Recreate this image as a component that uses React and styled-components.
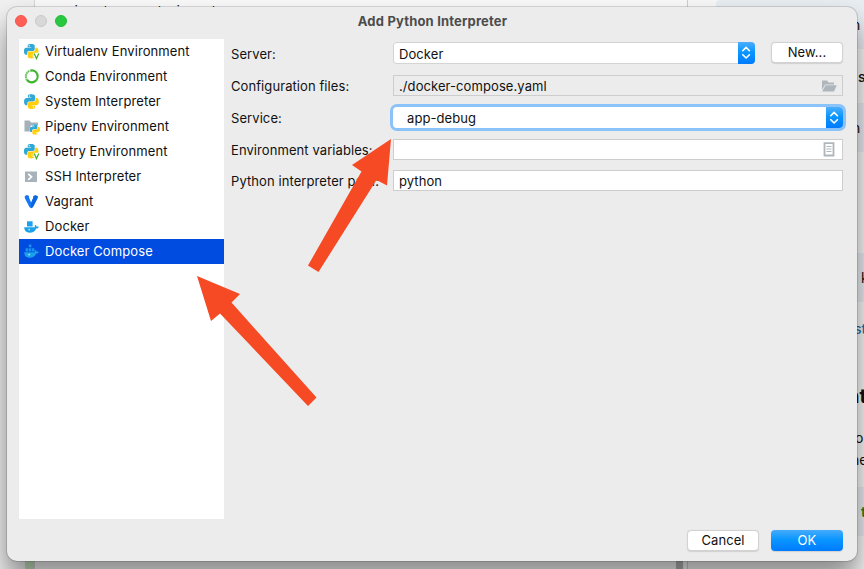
import React from "react";
import styled, { createGlobalStyle } from "styled-components";

const Global = createGlobalStyle`
  * { box-sizing: border-box; }
  body { margin: 0; overflow: hidden; font-family: Inter, sans-serif; font-size: 13px; color: #111; }
`;

const Desktop = styled.div`
  position: relative;
  display: flex;
  width: 864px;
  height: 569px;
  overflow: hidden;
  background: #f7f7f7;
`;
const Gutter = styled.div`
  flex: none;
  display: flex;
  flex-direction: column;
  justify-content: flex-end;
  align-items: flex-end;
  width: 35px;
  border-right: 1px solid #d5d5d5;
  background: #f0f0f0;
`;
const ChangeMark = styled.div`
  width: 9px;
  height: 60px;
  background: #c5e0bd;
`;
const Editor = styled.div`
  flex: none;
  display: flex;
  flex-direction: column;
  justify-content: space-between;
  align-items: flex-start;
  width: 653px;
  padding-left: 38px;
  border-right: 1px solid #cfcfcf;
  background: #f9f9f9;
`;
const CodeLine = styled.div`
  height: 14px;
  line-height: 21px;
  font-family: "Liberation Mono", monospace;
  font-size: 10px;
  font-weight: 700;
  white-space: pre;
`;
const ScrollThumb = styled.div`
  align-self: flex-end;
  width: 7px;
  height: 40px;
  margin-right: 4px;
  background: #b4b4b4;
`;
const Docs = styled.div`
  flex: none;
  width: 176px;
  padding-left: 28px;
`;
const DocLine = styled.div`
  display: flex;
  align-items: center;
  height: ${(p) => p.$h}px;
  padding-left: ${(p) => p.$x || 0}px;
  background: ${(p) => (p.$code ? "#e8edf1" : "transparent")};
  border-radius: ${(p) => (p.$code ? "4px 0 0 4px" : 0)};
  color: ${(p) => p.$color || "#111"};
  font-size: ${(p) => p.$size || 14}px;
  font-weight: ${(p) => p.$weight || 400};
  white-space: pre;
`;

const Dialog = styled.section`
  position: absolute;
  inset: 7px 7px 8px 7px;
  display: flex;
  flex-direction: column;
  border-radius: 10px;
  background: #ececec;
  box-shadow: 0 0 0 1px rgba(0, 0, 0, 0.13), 0 20px 30px rgba(0, 0, 0, 0.36), 0 12px 20px rgba(0, 0, 0, 0.12);
`;
const TitleBar = styled.header`
  display: grid;
  grid-template-columns: 60px 1fr 67px;
  align-items: center;
  height: 32px;
  padding: 0 0 4px 8px;
`;
const Lights = styled.div`
  display: flex;
  gap: 8px;
`;
const Light = styled.span`
  width: 12px;
  height: 12px;
  border-radius: 50%;
  background: ${(p) => p.$fill};
  border: 1px solid ${(p) => p.$edge};
`;
const Title = styled.h1`
  margin: 0;
  text-align: center;
  font-size: 13px;
  line-height: 16px;
  font-weight: 700;
  letter-spacing: 0.18px;
  color: #4c4c4c;
`;
const Content = styled.div`
  display: flex;
  gap: 7px;
  padding: 0 14px 0 12px;
`;
const KindList = styled.ul`
  width: 205px;
  height: 480px;
  margin: 0;
  padding: 0;
  list-style: none;
  background: #fff;
`;
const KindItem = styled.li`
  display: flex;
  align-items: center;
  gap: 5px;
  height: 25px;
  padding-left: 5px;
  background: ${(p) => (p.$selected ? "#004be0" : "transparent")};
  color: ${(p) => (p.$selected ? "#fff" : "#111")};
  letter-spacing: 0.1px;
  svg { width: 16px; height: 16px; flex: none; }
`;
const KindName = styled.span`
  padding-bottom: 1px;
`;
const Form = styled.div`
  display: grid;
  grid-template-columns: 162px 450px;
  grid-template-rows: 22px 22px 22px 22px 22px;
  row-gap: 10px;
  align-content: start;
  padding-top: 3px;
  letter-spacing: 0.08px;
`;
const Label = styled.label`
  line-height: ${(p) => (p.$last ? 22 : 24)}px;
  height: 22px;
  white-space: nowrap;
`;
const Pair = styled.div`
  display: flex;
  justify-content: space-between;
`;
const Combo = styled.div`
  display: flex;
  justify-content: space-between;
  width: ${(p) => p.$w}px;
  height: ${(p) => (p.$focus ? 21 : 22)}px;
  margin-top: ${(p) => (p.$focus ? 1 : 0)}px;
  padding-left: ${(p) => (p.$focus ? 14 : 6)}px;
  line-height: ${(p) => (p.$focus ? 22 : 24)}px;
  border-radius: 4px;
  background: #fff;
  box-shadow: ${(p) => (p.$focus ? "0 0 0 3px #8ac2fa" : "inset 0 0 0 1px #d4d4d4")};
`;
const Stepper = styled.span`
  display: flex;
  align-items: center;
  justify-content: center;
  width: 17px;
  border-radius: 0 4px 4px 0;
  background: linear-gradient(#4caefc, #0a96ff 45%, #007bff);
`;
const Field = styled.div`
  display: flex;
  align-items: center;
  justify-content: space-between;
  height: 21px;
  margin-top: ${(p) => (p.$last ? 0 : 1)}px;
  padding: 0 ${(p) => p.$end || 5}px 0 5px;
  border: 1px solid #cdcdcd;
  background: ${(p) => (p.$disabled ? "#ececec" : "#fff")};
`;
const Button = styled.button`
  width: 72px;
  height: 21px;
  padding: 0;
  border: ${(p) => (p.$primary ? "0" : "1px solid #d2d2d2")};
  border-radius: 4px;
  font: inherit;
  line-height: ${(p) => (p.$primary ? 21 : 19)}px;
  letter-spacing: 0.08px;
  color: ${(p) => (p.$primary ? "#fff" : "#111")};
  background: ${(p) => (p.$primary ? "linear-gradient(#46acfc, #0a96ff 45%, #007bff)" : "#fff")};
  box-shadow: 0 0.5px 1px rgba(0, 0, 0, 0.12);
`;
const Footer = styled.footer`
  display: flex;
  justify-content: flex-end;
  gap: 12px;
  padding: 11px 14px 0 0;
`;
const Arrows = styled.svg`
  position: absolute;
  inset: 0;
  pointer-events: none;
`;

const SNAKE =
  "M14.25.18l.9.2.73.26.59.3.45.32.34.34.25.34.16.33.1.3.04.26.02.2-.01.13V8.5l-.05.63-.13.55-.21.46-.26.38-.3.31-.33.25-.35.19-.35.14-.33.1-.3.07-.26.04-.21.02H8.77l-.69.05-.59.14-.5.22-.41.27-.33.32-.27.35-.2.36-.15.37-.1.35-.07.32-.04.27-.02.21v3.06H3.17l-.21-.03-.28-.07-.32-.12-.35-.18-.36-.26-.36-.36-.35-.46-.32-.59-.28-.73-.21-.88-.14-1.05-.05-1.23.06-1.22.16-1.04.24-.87.32-.71.36-.57.4-.44.42-.33.42-.24.4-.16.36-.1.32-.05.24-.01h.16l.06.01h8.16v-.83H6.18l-.01-2.75-.02-.37.05-.34.11-.31.17-.28.25-.26.31-.23.38-.2.44-.18.51-.15.58-.12.64-.1.71-.06.77-.04.84-.02 1.27.05zm-6.3 1.98l-.23.33-.08.41.08.41.23.34.33.22.41.09.41-.09.33-.22.23-.34.08-.41-.08-.41-.23-.33-.33-.22-.41-.09-.41.09z";

const Snakes = ({ transform }) => (
  <g transform={transform}>
    <path d={SNAKE} fill="#2fa8d5" />
    <path d={SNAKE} fill="#ffcf0f" transform="rotate(180 12 12)" />
  </g>
);
const PythonIcon = () => (
  <svg viewBox="0 0 16 16"><Snakes transform="translate(.1 .3) scale(.61)" /></svg>
);
const VenvIcon = () => (
  <svg viewBox="0 0 16 16">
    <Snakes transform="translate(0 0) scale(.6)" />
    <path d="M9.3 8.8H16V16H10.5z" fill="#fff" />
    <path d="M10.2 9.6l2.3 5 2.3-5" fill="none" stroke="#4db32e" strokeWidth="1.3" />
  </svg>
);
const CondaIcon = () => (
  <svg viewBox="0 0 16 16" fill="none" stroke="#3fb42d">
    <path d="M6.6 1.6a5.9 5.9 0 1 1-3.5 9.4" strokeWidth="2.2" />
    <path d="M3.1 11A5.9 5.9 0 0 1 6.6 1.6" strokeWidth="2.1" strokeDasharray="1.7 .5" opacity=".75" />
  </svg>
);
const PipenvIcon = () => (
  <svg viewBox="0 0 16 16">
    <path d="M.5 1.500h5l1.600 2H14v9H.5z" fill="#a5b0b8" />
    <circle cx="10.800" cy="10.600" r="5.300" fill="#fff" />
    <Snakes transform="translate(5.700 5.300) scale(.43)" />
  </svg>
);
const SshIcon = () => (
  <svg viewBox="0 0 16 16">
    <path d="M1 2.500h12v10.500h-12z" fill="#a7b2ba" />
    <path d="M4.200 4.800l3.300 3-3.300 3" fill="none" stroke="#fff" strokeWidth="1.700" />
  </svg>
);
const VagrantIcon = () => (
  <svg viewBox="0 0 16 16">
    <path d="M.8 1.900l2.200-.9 2 .9v1.500l2.200 5.400 2.200-5.400V1.900l2-.9 2.200.9v2L9 12.900l-1.800 1.400-1.800-1.400L.8 3.900z" fill="#1477f5" />
    <path d="M9.400 3.400V1.900h4.200v2L9 12.900l-1.800 1.400V8.800z" fill="#0b64e0" />
  </svg>
);
const Hull = () => (
  <>
    <path d="M.2 8.300h10.800c-.4-.9-.4-1.700 0-2.500.9.400 1.400 1.100 1.600 1.700.7-.1 1.500 0 2.200.4-.4 1.100-1.400 1.500-2.600 1.500-1.200 3-3.300 4.300-6.500 4.300-3.600 0-5.500-1.800-5.500-5.400z" fill="#1ba1e8" />
    <circle cx="5.200" cy="10.600" r=".9" fill="#bfe4fa" />
  </>
);
const DockerIcon = () => (
  <svg viewBox="0 0 16 16"><path d="M3 2.300h5.600v5.200H3z" fill="#1ba1f0" /><Hull /></svg>
);
const ComposeIcon = () => (
  <svg viewBox="0 0 16 16">
    <path d="M4.800.4h2.600v2.800H4.800zM1.600 4.200h2.600v3.200H1.600zM4.800 4.200h2.600v3.200H4.800zM8 4.200h2.400v3.200H8z" fill="#1794ee" />
    <Hull />
  </svg>
);
const Chevrons = () => (
  <svg width="11" height="16" viewBox="0 0 11 16" fill="none" stroke="#fff" strokeWidth="1.600" strokeLinecap="round" strokeLinejoin="round">
    <path d="M1.800 5.700L5.100 2.400l3.300 3.300M1.800 9.700l3.300 3.300 3.300-3.300" />
  </svg>
);
const FolderIcon = () => (
  <svg width="16" height="14" viewBox="0 0 16 14" fill="#afb6bb">
    <path d="M1 1.500h5l1.500 2H13v2H4L1 11z" />
    <path d="M4.500 6.200H15.800L13 12.500H1.200z" />
  </svg>
);
const ListIcon = () => (
  <svg width="12" height="15" viewBox="0 0 12 15" fill="none" stroke="#afb6bb">
    <path d="M1.500 1.200h9v12.300h-9z" strokeWidth="1.800" />
    <path d="M3.500 4.500h5M3.500 7h5M3.500 9.500h5" strokeWidth="1" />
  </svg>
);

const KINDS = [
  ["Virtualenv Environment", VenvIcon],
  ["Conda Environment", CondaIcon],
  ["System Interpreter", PythonIcon],
  ["Pipenv Environment", PipenvIcon],
  ["Poetry Environment", VenvIcon],
  ["SSH Interpreter", SshIcon],
  ["Vagrant", VagrantIcon],
  ["Docker", DockerIcon],
  ["Docker Compose", ComposeIcon],
];

export default function App() {
  return (
    <Desktop>
      <Global />
      <Gutter><ChangeMark /></Gutter>
      <Editor>
        <CodeLine>import some.outs.inspect</CodeLine>
        <ScrollThumb />
      </Editor>
      <Docs>
        <DocLine $h={49} $code $x={136}>n</DocLine>
        <DocLine $h={54} $x={142} $weight={500}>s</DocLine>
        <DocLine $h={49} $code $x={136}>n</DocLine>
        <DocLine $h={101} />
        <DocLine $h={49} $code $x={145}>k</DocLine>
        <DocLine $h={53} $x={138} $weight={500} $color="#1c74ad">st</DocLine>
        <DocLine $h={10} />
        <DocLine $h={61} $x={131} $size={20} $weight={700}>nt</DocLine>
        <DocLine $h={22} $x={139}>o</DocLine>
        <DocLine $h={22} $x={135}>ne</DocLine>
        <DocLine $h={17} />
        <DocLine $h={49} $code $x={145} $weight={600} $color="#16851c">t</DocLine>
      </Docs>

      <Dialog>
        <TitleBar>
          <Lights>
            <Light $fill="#ff5f57" $edge="#f2554d" />
            <Light $fill="#d8d8d8" $edge="#c9c9c9" />
            <Light $fill="#28c840" $edge="#22bc39" />
          </Lights>
          <Title>Add Python Interpreter</Title>
        </TitleBar>
        <Content>
          <KindList>
            {KINDS.map(([name, Icon]) => (
              <KindItem key={name} $selected={name === "Docker Compose"}>
                <Icon />
                <KindName>{name}</KindName>
              </KindItem>
            ))}
          </KindList>
          <Form>
            <Label>Server:</Label>
            <Pair>
              <Combo $w={362}>Docker<Stepper><Chevrons /></Stepper></Combo>
              <Button>New...</Button>
            </Pair>
            <Label>Configuration files:</Label>
            <Field $disabled>./docker-compose.yaml<FolderIcon /></Field>
            <Label>Service:</Label>
            <Combo $w={450} $focus>app-debug<Stepper><Chevrons /></Stepper></Combo>
            <Label>Environment variables:</Label>
            <Field $end={7}><span /><ListIcon /></Field>
            <Label $last>Python interpreter path:</Label>
            <Field $last>python</Field>
          </Form>
        </Content>
        <Footer>
          <Button>Cancel</Button>
          <Button $primary>OK</Button>
        </Footer>
      </Dialog>

      <Arrows width="864" height="569" fill="#f54a24">
        <path d="M391 139L387 185.500 376.500 180 318.500 272 308 265.500 361.500 171.500 352 165z" />
        <path d="M197 276L240 294 231.500 302.500 316.500 397.500 308 406 220 313.500 211 321z" />
      </Arrows>
    </Desktop>
  );
}
